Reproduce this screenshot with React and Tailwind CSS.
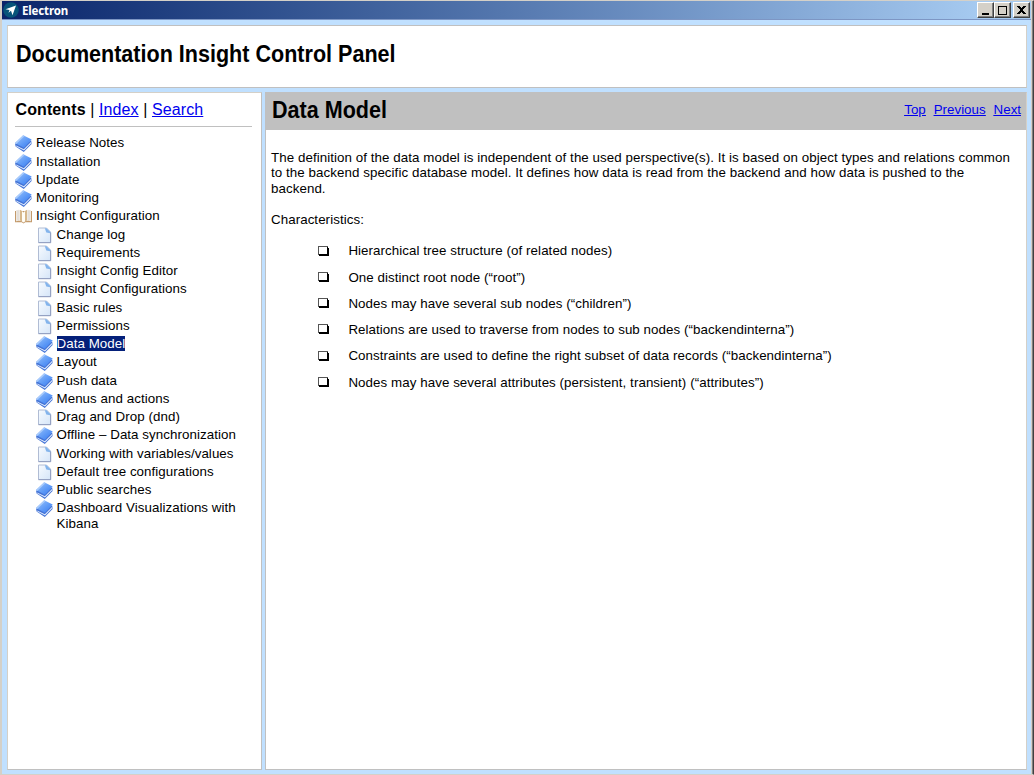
import React from "react";

const BookIcon = () => (
  <svg width="17" height="17" viewBox="0 0 17 17" className="shrink-0">
    <defs>
      <linearGradient id="cover" x1="0" y1="0" x2="1" y2="1">
        <stop offset="0" stopColor="#9cc6fd" />
        <stop offset=".6" stopColor="#5a97f6" />
        <stop offset="1" stopColor="#3b7cf0" />
      </linearGradient>
    </defs>
    <path d="M0 8.400 L.6 11.600 L8.800 17 L16.600 9 L16.200 5.600 L8 9z" fill="#4474d6" />
    <path d="M1 10.400 L8.800 14.200 L16 7 L16.100 8.300 L9 15.500 L1.400 11.500z" fill="#e8f1ff" />
    <path d="M0 8 L8.200 .3 L16.700 4.600 L8.900 12.800z" fill="url(#cover)" />
    <path d="M0 8 L8.200 .3 L9.600 1 L1.500 8.800z" fill="#a9cbfb" />
  </svg>
);

const OpenBookIcon = () => (
  <svg width="17" height="17" viewBox="0 0 17 17" className="shrink-0">
    <path d="M0 3h17v11.200h-6.800L8.500 15.600 6.800 14.200H0z" fill="#c39a6b" />
    <path d="M1 2.200 Q4.500 1 6.500 2.800 V13.300 Q4 12.200 1 13.200z" fill="#eee9e2" />
    <path d="M16 2.200 Q12.500 1 10.500 2.800 V13.300 Q13 12.200 16 13.200z" fill="#eee9e2" />
    <path d="M5 1.800 L7 3v10.500L5 12.500zM12 1.800L10 3v10.500l2-1z" fill="#d6b88c" />
    <path d="M7 3 L8.500 4.500 L10 3v10.500l-1.500 1L7 13.500z" fill="#fffdf6" />
    <path d="M3 2.500v9.500M14 2.500v9.500" stroke="#d8d5d2" />
  </svg>
);

const PageIcon = () => (
  <svg width="17" height="17" viewBox="0 0 17 17" className="shrink-0">
    <defs>
      <linearGradient id="sheet" x1="0" y1="0" x2="1" y2="1">
        <stop offset="0" stopColor="#f7fbff" />
        <stop offset="1" stopColor="#d5e5f8" />
      </linearGradient>
    </defs>
    <path d="M2.500 1 H10.500 L14.500 5 V15.500 H2.500z" fill="url(#sheet)" stroke="#b0bcd4" />
    <path d="M14.700 5.500V15.700H2.500" fill="none" stroke="#8f9dbf" />
    <path d="M8.800 1.200 H10.500 L14.300 5 V6.200 L10.300 5.500z" fill="#83b4ec" />
  </svg>
);

const icons = { book: BookIcon, open: OpenBookIcon, page: PageIcon };

const topItems = [
  ["book", "Release Notes"],
  ["book", "Installation"],
  ["book", "Update"],
  ["book", "Monitoring"],
  ["open", "Insight Configuration"],
];

const subItems = [
  ["page", "Change log"],
  ["page", "Requirements"],
  ["page", "Insight Config Editor"],
  ["page", "Insight Configurations"],
  ["page", "Basic rules"],
  ["page", "Permissions"],
  ["book", "Data Model", true],
  ["book", "Layout"],
  ["book", "Push data"],
  ["book", "Menus and actions"],
  ["page", "Drag and Drop (dnd)"],
  ["book", "Offline – Data synchronization"],
  ["page", "Working with variables/values"],
  ["page", "Default tree configurations"],
  ["book", "Public searches"],
  ["book", "Dashboard Visualizations with Kibana"],
];

const bullets = [
  "Hierarchical tree structure (of related nodes)",
  "One distinct root node (“root”)",
  "Nodes may have several sub nodes (“children”)",
  "Relations are used to traverse from nodes to sub nodes (“backendinterna”)",
  "Constraints are used to define the right subset of data records (“backendinterna”)",
  "Nodes may have several attributes (persistent, transient) (“attributes”)",
];

function TreeItem({ icon, label, selected }) {
  const Icon = icons[icon];
  return (
    <li className="flex min-h-[18.25px] items-start gap-[4px]">
      <Icon />
      <span
        className={
          selected
            ? "bg-[#04207a] leading-[15px] text-white"
            : "leading-4"
        }
      >
        {label}
      </span>
    </li>
  );
}

function CaptionButton({ children, className = "" }) {
  return (
    <button
      className={
        "h-[16px] w-[17px] border border-t-white border-l-white border-r-[#404040] border-b-[#404040] bg-[#d4d0c8] shadow-[inset_-1px_-1px_0_#808080] " +
        className
      }
    >
      <svg width="15" height="14" viewBox="0 0 15 14" fill="none" stroke="#000" shapeRendering="crispEdges">
        {children}
      </svg>
    </button>
  );
}

export default function App() {
  return (
    <div className="flex h-[775px] w-[1034px] flex-col overflow-hidden border-t border-r border-b border-l-2 border-t-[#d4d0c8] border-r-[#404040] border-b-[#d4d0c8] border-l-[#d4d0c8] bg-[#c0e0ff] font-['Liberation_Sans',Arial,sans-serif] text-black">
      <div className="flex min-h-0 flex-1 flex-col border-r border-r-[#808080]">
        <div className="flex min-h-0 flex-1 flex-col border-r border-r-[#d4d0c8]">
          <header className="flex h-[18px] shrink-0 items-center bg-linear-to-r from-[#0a246a] to-[#a6caf0] to-95% pr-px pl-px">
            <svg width="16" height="16" viewBox="0 0 16 16">
              <circle cx="8" cy="8" r="7.800" fill="#075479" />
              <path d="M2.500 7.300 L13 3.500 L9.500 13.200 L8 8.800 L5.500 10.800 L6.500 8z" fill="#fff" />
            </svg>
            <span className="ml-[3px] pt-px font-['Noto_Sans',sans-serif] text-[11.5px] font-bold tracking-[-0.15px] text-white">
              Electron
            </span>
            <div className="ml-auto flex">
              <CaptionButton>
                <path d="M4 10.500h7M4 11.500h7" />
              </CaptionButton>
              <CaptionButton>
                <path d="M3 3.500h9M3.500 3v9M11.500 3v9M3 11.500h9" />
              </CaptionButton>
              <CaptionButton className="ml-[2px]">
                <path d="M3 3.500h3M9 3.500h3M4 4.500h3M8 4.500h3M5 5.500h5M6 6.500h3M6 7.500h3M5 8.500h5M4 9.500h3M8 9.500h3M3 10.500h3M9 10.500h3" />
              </CaptionButton>
            </div>
          </header>

          <div className="flex min-h-0 flex-1 flex-col gap-[4px] border-t border-[#7d96c4] pt-[5px] pr-[4px] pb-[4px] pl-[5px]">
            <section className="flex h-[63px] shrink-0 items-center border border-t-[#c0c0c0] border-r-[#d4d0c8] border-b-[#c0c0c0] border-l-[#d4d0c8] bg-white pb-[4px] pl-[8px]">
              <h1 className="origin-left scale-x-[.937] text-[23px] font-bold">Documentation Insight Control Panel</h1>
            </section>

            <div className="flex min-h-0 flex-1 gap-[3px]">
              <nav className="w-[255px] shrink-0 border border-t-[#d4d0c8] border-r-[#c0c0c0] border-b-[#c0c0c0] border-l-[#d4d0c8] bg-white pt-[6px] pr-[9px] pl-[7px]">
                <div className="h-[28px] border-b border-[#c0c0c0] pl-[.5px] text-[16px] leading-[21px] tracking-[0.1px] whitespace-nowrap">
                  <b>Contents</b> | <a className="text-[#0000ee] underline">Index</a> |{" "}
                  <a className="text-[#0000ee] underline">Search</a>
                </div>
                <ul className="pt-[8.3px] text-[13.33px] tracking-[0.07px]">
                  {topItems.map(([icon, label]) => (
                    <TreeItem key={label} icon={icon} label={label} />
                  ))}
                </ul>
                <ul className="pl-[20.5px] text-[13.33px] tracking-[0.06px]">
                  {subItems.map(([icon, label, selected]) => (
                    <TreeItem key={label} icon={icon} label={label} selected={selected} />
                  ))}
                </ul>
              </nav>

              <main className="min-w-0 flex-1 border border-t-[#c0c0c0] border-r-[#d4d0c8] border-b-[#c0c0c0] border-l-[#c0c0c0] bg-white">
                <div className="flex h-[37px] items-center bg-[#c0c0c0] pr-[5px] pb-[2px] pl-[6px]">
                  <h2 className="origin-left scale-x-[.937] text-[23px] font-bold">Data Model</h2>
                  <div className="ml-auto flex gap-[8px] pb-[2px] text-[13.33px] text-[#0000ee] underline">
                    <a>Top</a>
                    <a>Previous</a>
                    <a>Next</a>
                  </div>
                </div>
                <div className="pt-[20px] pl-[5px] text-[13.33px] leading-[15.4px] tracking-[0.068px] whitespace-nowrap">
                  <p>
                    The definition of the data model is independent of the used perspective(s). It is based on object types and relations common
                    <br />
                    to the backend specific database model. It defines how data is read from the backend and how data is pushed to the
                    <br />
                    backend.
                  </p>
                  <p className="mt-[15.4px]">Characteristics:</p>
                  <ul className="mt-[11px] pl-[47px]">
                    {bullets.map((text) => (
                      <li key={text} className="flex h-[26.25px] items-center">
                        <svg width="11" height="11" viewBox="0 0 11 11" className="mr-[19.4px]" shapeRendering="crispEdges">
                          <path d="M.5 .5h9v8h-9z" fill="#fff" stroke="#555" />
                          <path d="M1 8.500h9M9.500 1v9M1 9.500h9.500M10.500 2v8" fill="none" stroke="#000" />
                        </svg>
                        {text}
                      </li>
                    ))}
                  </ul>
                </div>
              </main>
            </div>
          </div>
        </div>
      </div>
    </div>
  );
}
